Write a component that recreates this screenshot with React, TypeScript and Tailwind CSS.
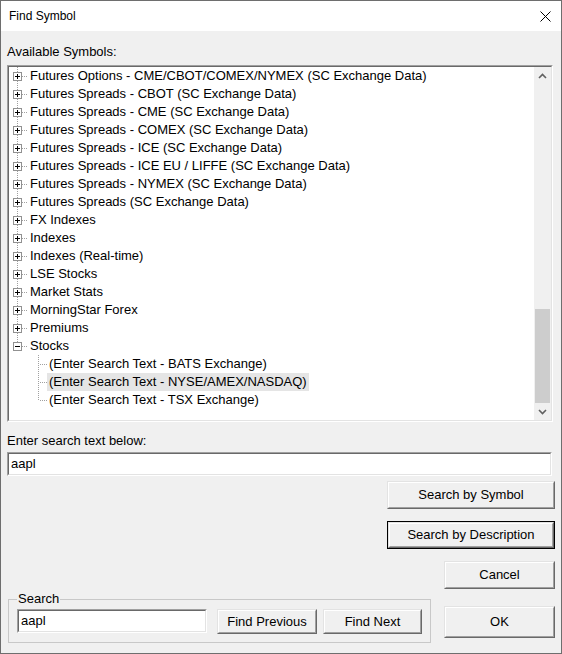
import React from "react"

const roots = [
  "Futures Options - CME/CBOT/COMEX/NYMEX (SC Exchange Data)",
  "Futures Spreads - CBOT (SC Exchange Data)",
  "Futures Spreads - CME (SC Exchange Data)",
  "Futures Spreads - COMEX (SC Exchange Data)",
  "Futures Spreads - ICE (SC Exchange Data)",
  "Futures Spreads - ICE EU / LIFFE (SC Exchange Data)",
  "Futures Spreads - NYMEX (SC Exchange Data)",
  "Futures Spreads (SC Exchange Data)",
  "FX Indexes",
  "Indexes",
  "Indexes (Real-time)",
  "LSE Stocks",
  "Market Stats",
  "MorningStar Forex",
  "Premiums",
]

const stocks = [
  "(Enter Search Text - BATS Exchange)",
  "(Enter Search Text - NYSE/AMEX/NASDAQ)",
  "(Enter Search Text - TSX Exchange)",
]

function RootConn({ last, open }: { last?: boolean; open?: boolean }) {
  return (
    <svg width="19" height="18" className="shrink-0" shapeRendering="crispEdges">
      <line x1="8.5" y1="0" x2="8.5" y2={last ? 5 : 18} stroke="#a0a0a0" strokeDasharray="1 1" />
      <line x1="13" y1="9.5" x2="19" y2="9.5" stroke="#a0a0a0" strokeDasharray="1 1" />
      <rect x="4.5" y="5.5" width="8" height="8" fill="#fff" stroke="#919191" />
      <line x1="6" y1="9.5" x2="11" y2="9.5" stroke="#000" />
      {!open && <line x1="8.5" y1="7" x2="8.5" y2="12" stroke="#000" />}
    </svg>
  )
}

function ChildConn({ last }: { last?: boolean }) {
  return (
    <svg width="38" height="18" className="shrink-0" shapeRendering="crispEdges">
      <line x1="29.5" y1="0" x2="29.5" y2={last ? 10 : 18} stroke="#a0a0a0" strokeDasharray="1 1" />
      <line x1="31" y1="9.5" x2="38" y2="9.5" stroke="#a0a0a0" strokeDasharray="1 1" />
    </svg>
  )
}

function Btn({ label, className, def }: { label: string; className: string; def?: boolean }) {
  const face = (
    <div className="flex h-full w-full border border-t-[#e3e3e3] border-l-[#e3e3e3] border-b-[#696969] border-r-[#696969]">
      <div className="flex flex-1 items-center justify-center border border-t-white border-l-white border-b-[#a0a0a0] border-r-[#a0a0a0] bg-[#f0f0f0] text-[13px] text-black">
        {label}
      </div>
    </div>
  )
  return <div className={`${className} ${def ? "border border-black" : ""}`}>{face}</div>
}

function Sunken({ className, children }: { className: string; children: React.ReactNode }) {
  return (
    <div className={`${className} border border-t-[#a0a0a0] border-l-[#a0a0a0] border-b-white border-r-white`}>
      <div className="flex h-full w-full border border-t-[#696969] border-l-[#696969] border-b-[#e3e3e3] border-r-[#e3e3e3] bg-white">
        {children}
      </div>
    </div>
  )
}

function Chevron({ up }: { up?: boolean }) {
  return (
    <div className="flex h-[17px] items-center justify-center">
      <svg width="9" height="6" viewBox="0 0 9 6">
        <polyline
          points={up ? "1,5 4.5,1.5 8,5" : "1,1 4.5,4.5 8,1"}
          fill="none"
          stroke="#606060"
          strokeWidth="1.6"
        />
      </svg>
    </div>
  )
}

export default function App() {
  return (
    <div className="flex h-[654px] w-[562px] flex-col border border-[#6e6e6e] bg-[#f0f0f0] font-['Liberation_Sans',Arial,sans-serif] text-black">
      {/* Title bar */}
      <div className="flex h-[30px] shrink-0 items-center justify-between bg-white pl-[8px] pr-[10px]">
        <span className="text-[12px]">Find Symbol</span>
        <svg width="11" height="11" viewBox="0 0 11 11">
          <path d="M0.5 0.5L10.5 10.5M10.5 0.5L0.5 10.5" stroke="#000" strokeWidth="1" />
        </svg>
      </div>

      <div className="flex flex-1 flex-col px-[6px] pt-[13px]">
        <div className="text-[13px] leading-[16px]">Available Symbols:</div>

        <Sunken className="mt-[5px] h-[357px] w-[546px]">
          <div className="flex flex-1 flex-col overflow-hidden text-[13px]">
            {roots.map((r) => (
              <div key={r} className="flex h-[18px] shrink-0 items-center">
                <RootConn />
                <span className="whitespace-nowrap px-[2px] leading-[18px]">{r}</span>
              </div>
            ))}
            <div className="flex h-[18px] shrink-0 items-center">
              <RootConn last open />
              <span className="whitespace-nowrap px-[2px] leading-[18px]">Stocks</span>
            </div>
            {stocks.map((s, i) => (
              <div key={s} className="flex h-[18px] shrink-0 items-center">
                <ChildConn last={i === stocks.length - 1} />
                <span
                  className={`whitespace-nowrap px-[2px] leading-[18px] ${i === 1 ? "bg-[#e5e5e5]" : ""}`}
                >
                  {s}
                </span>
              </div>
            ))}
          </div>
          {/* Scrollbar */}
          <div className="flex w-[17px] shrink-0 flex-col bg-[#f0f0f0]">
            <Chevron up />
            <div className="flex flex-1 flex-col justify-end">
              <div className="mx-[1px] h-[94px] bg-[#cdcdcd]" />
            </div>
            <Chevron />
          </div>
        </Sunken>

        <div className="mt-[11px] text-[13px] leading-[16px]">Enter search text below:</div>
        <Sunken className="mt-[3px] h-[24px] w-[545px]">
          <span className="pl-[2px] text-[13px] leading-[20px]">aapl</span>
        </Sunken>

        <Btn label="Search by Symbol" className="ml-auto mt-[5px] h-[28px] w-[168px]" />
        <Btn label="Search by Description" className="ml-auto mt-[12px] h-[28px] w-[168px]" def />
        <Btn label="Cancel" className="ml-auto mt-[12px] h-[28px] w-[111px]" />

        <div className="mt-[3px] flex items-start">
          <fieldset className="ml-[1px] w-[420px] border border-[#c8c8c8] px-[8px] pb-[8px] pt-[3px]">
            <legend className="px-[1px] text-[13px] leading-[14px]">Search</legend>
            <div className="flex items-start">
              <Sunken className="h-[24px] w-[190px]">
                <span className="pl-[2px] text-[13px] leading-[20px]">aapl</span>
              </Sunken>
              <Btn label="Find Previous" className="ml-[10px] h-[25px] w-[100px]" />
              <Btn label="Find Next" className="ml-[6px] h-[25px] w-[99px]" />
            </div>
          </fieldset>
          <Btn label="OK" className="ml-auto mt-[14px] h-[32px] w-[111px]" />
        </div>
      </div>
    </div>
  )
}
